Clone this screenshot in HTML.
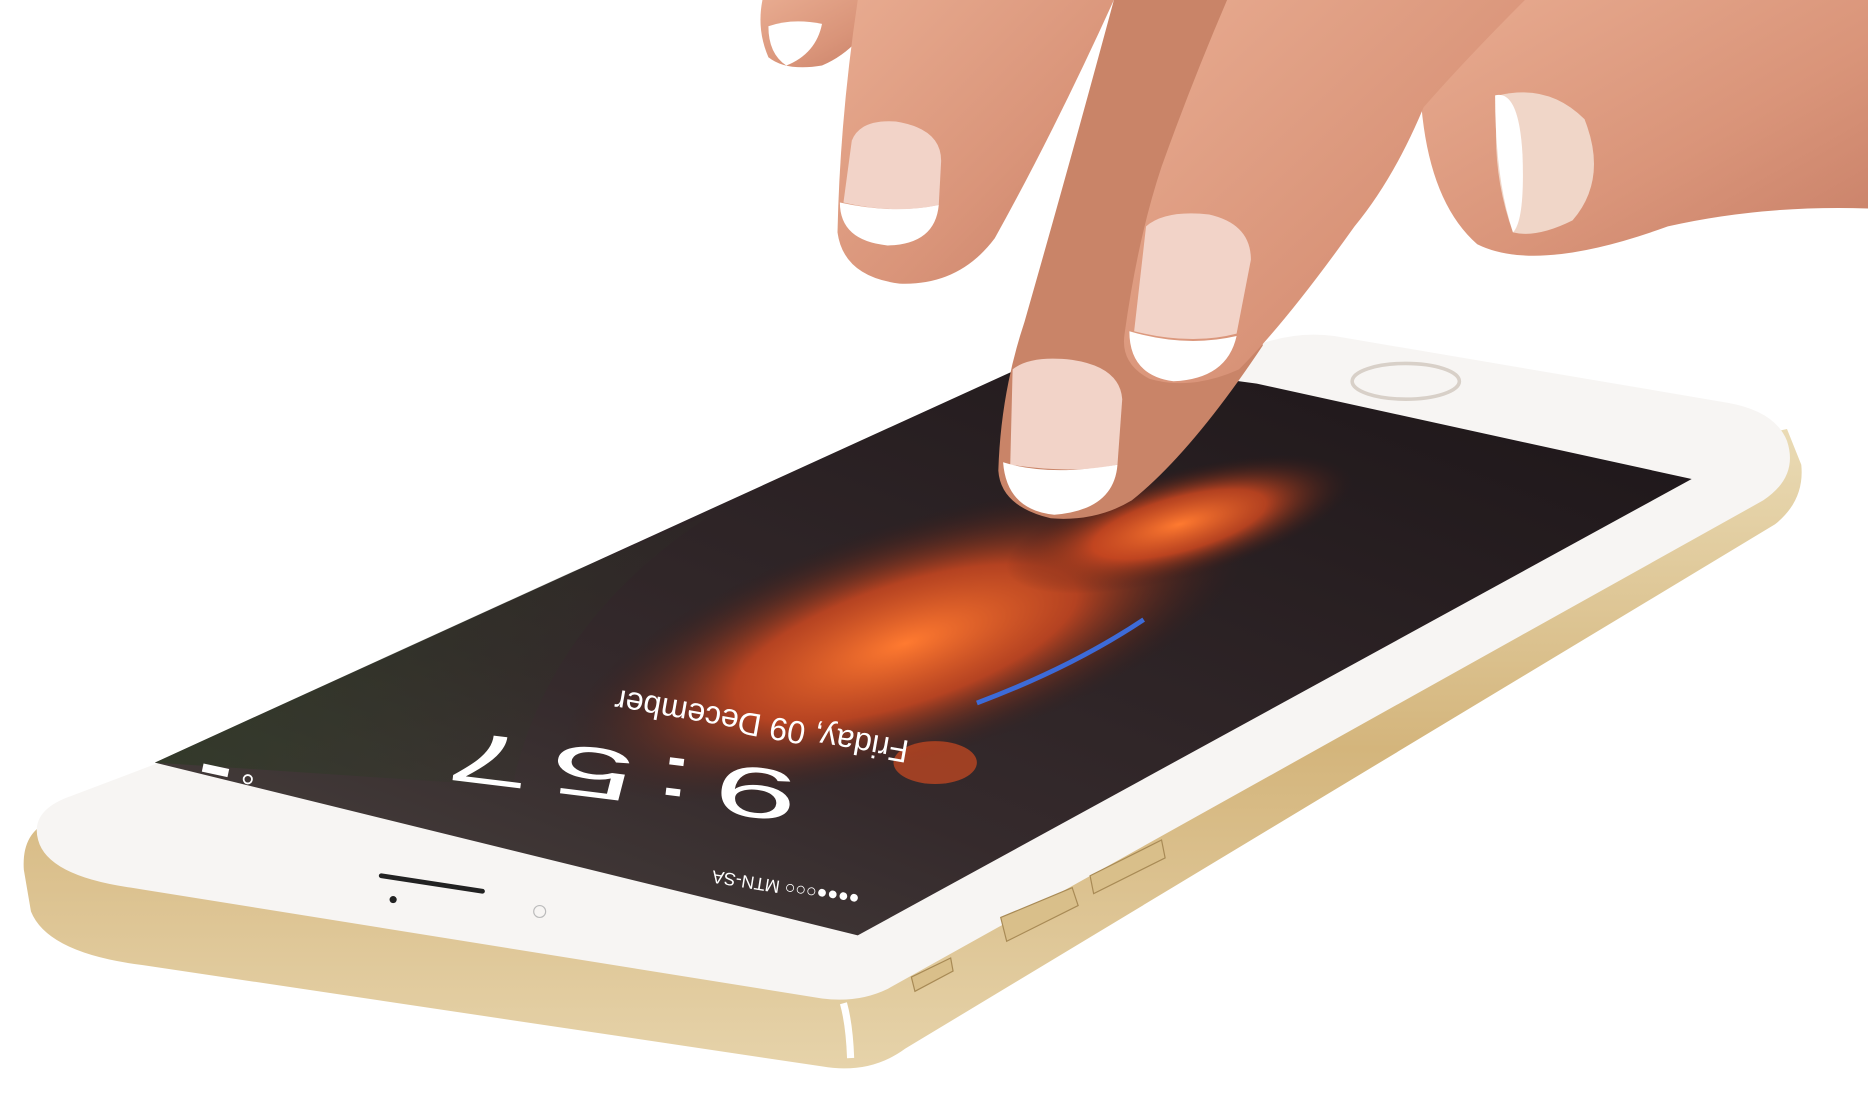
<!DOCTYPE html>
<html><head><meta charset="utf-8"><style>
html,body{margin:0;padding:0;background:#fff;width:1868px;height:1095px;overflow:hidden}
svg{display:block}
</style></head><body>
<svg width="1868" height="1095" viewBox="0 0 1568 919" preserveAspectRatio="none" xmlns="http://www.w3.org/2000/svg">
<defs>
<linearGradient id="gold" x1="0" y1="0" x2="0" y2="1">
<stop offset="0" stop-color="#eadbb5"/><stop offset="0.5" stop-color="#d4b57c"/><stop offset="1" stop-color="#e6d3aa"/></linearGradient>
<linearGradient id="scr" x1="0" y1="1" x2="1" y2="0">
<stop offset="0" stop-color="#4a4440"/><stop offset="0.35" stop-color="#352a2c"/><stop offset="1" stop-color="#1c1518"/></linearGradient>
<radialGradient id="fish" cx="0.5" cy="0.5" r="0.5">
<stop offset="0" stop-color="#ff7a30"/><stop offset="0.5" stop-color="#d64a20" stop-opacity="0.8"/><stop offset="1" stop-color="#3a1a18" stop-opacity="0"/></radialGradient>
<linearGradient id="skin" x1="0" y1="0" x2="1" y2="1">
<stop offset="0" stop-color="#e8ab90"/><stop offset="0.6" stop-color="#d99479"/><stop offset="1" stop-color="#c88068"/></linearGradient>
<linearGradient id="grn" x1="0" y1="0" x2="1" y2="0.3">
<stop offset="0" stop-color="#2c3a24" stop-opacity="0.9"/><stop offset="1" stop-color="#2c3a24" stop-opacity="0"/></linearGradient>
</defs>
<path d="M40 690 Q18 700 20 730 L26 765 Q40 800 120 810 L690 895 Q730 902 760 880 L1490 440 Q1515 420 1512 390 L1500 360 Z" fill="url(#gold)"/>
<path d="M708 842 Q713 860 714 888" stroke="#fff" stroke-width="6" fill="none"/>
<path d="M60 668 Q25 680 32 705 Q40 735 110 745 L690 838 Q720 842 745 830 L1480 420 Q1510 400 1500 370 Q1490 345 1450 338 L1120 282 Q1090 278 1060 288 Z" fill="#f7f5f3"/>
<path d="M130 640 L720 785 L1420 402 L1055 322 L880 298 Z" fill="url(#scr)"/>
<path d="M130 640 L480 480 L600 430 Q460 520 430 660 Z" fill="url(#grn)"/>
<ellipse cx="760" cy="540" rx="300" ry="100" transform="rotate(-18 760 540)" fill="url(#fish)"/>
<ellipse cx="990" cy="440" rx="150" ry="45" transform="rotate(-15 990 440)" fill="url(#fish)"/>
<path d="M820 590 Q900 560 960 520" stroke="#3d6bd8" stroke-width="4" fill="none"/>
<ellipse cx="785" cy="640" rx="35" ry="18" fill="#e85020" opacity="0.6"/>
<g fill="#fff" font-family="Liberation Sans, sans-serif">
<text transform="translate(672,649) rotate(187) scale(2.1,1)" font-size="60" letter-spacing="8">9:57</text>
<text transform="translate(764,622) rotate(190)" font-size="27">Friday, 09 December</text>
<text transform="translate(722,750) rotate(189)" font-size="15">●●●●○○○ MTN-SA</text>
<rect x="170" y="643" width="22" height="7" fill="#fff" transform="rotate(12 181 646)"/>
<circle cx="208" cy="654" r="3.5" fill="none" stroke="#fff" stroke-width="1.5"/>
</g>
<line x1="320" y1="735" x2="405" y2="748" stroke="#222" stroke-width="4" stroke-linecap="round"/>
<circle cx="330" cy="755" r="3" fill="#222"/>
<circle cx="453" cy="765" r="5" fill="none" stroke="#bbb"/>
<ellipse cx="1180" cy="320" rx="45" ry="15" fill="none" stroke="#d8d0c8" stroke-width="3"/>
<path d="M840 770 L900 745 L905 760 L845 790 Z" fill="#d9bf8a" stroke="#a88a55"/>
<path d="M915 735 L975 705 L978 720 L918 750 Z" fill="#d9bf8a" stroke="#a88a55"/>
<path d="M765 820 L798 804 L800 815 L768 832 Z" fill="#d9bf8a" stroke="#a88a55"/>
<g fill="url(#skin)">
<path d="M640 0 L740 0 Q725 40 690 55 Q660 60 645 48 Q635 25 640 0 Z"/>
<path d="M1193 88 Q1200 170 1240 205 Q1290 230 1400 190 Q1480 172 1568 175 L1568 0 L1270 0 Z"/>
<path d="M720 0 L935 0 Q885 110 835 200 Q805 240 755 238 Q708 232 703 195 Q705 100 720 0 Z"/>
<path d="M935 0 L1035 0 L1060 290 Q1000 380 950 420 Q920 438 882 435 Q840 425 838 395 Q840 330 860 270 Q900 130 935 0 Z" fill="#c98468"/>
<path d="M1030 0 L1280 0 Q1230 50 1195 90 Q1170 150 1137 190 Q1080 270 1040 310 Q1000 328 965 318 Q940 305 944 280 Q955 200 975 140 Q1000 70 1030 0 Z"/>
</g>
<path d="M850 310 Q865 298 900 302 Q940 308 942 335 L938 390 Q900 398 848 390 Z" fill="#f2d3c8"/>
<path d="M842 388 Q880 400 938 390 Q935 428 885 432 Q845 428 842 388 Z" fill="#fff"/>
<path d="M962 190 Q978 176 1015 180 Q1050 188 1050 218 L1038 280 Q1000 290 952 278 Z" fill="#f2d3c8"/>
<path d="M948 278 Q995 292 1038 282 Q1030 318 985 320 Q948 315 948 278 Z" fill="#fff"/>
<path d="M715 118 Q722 100 752 102 Q790 108 790 135 L788 172 Q750 180 708 170 Z" fill="#f2d3c8"/>
<path d="M705 170 Q750 180 788 172 Q785 205 745 206 Q705 202 705 170 Z" fill="#fff"/>
<path d="M1258 80 Q1300 70 1330 100 Q1350 150 1320 185 Q1290 200 1270 195 Q1250 140 1258 80 Z" fill="#f0d6c8"/>
<path d="M1255 80 Q1275 75 1278 130 Q1280 185 1270 195 Q1255 150 1255 80 Z" fill="#fff"/>
<path d="M645 22 Q665 15 690 20 Q685 45 660 55 Q645 45 645 22 Z" fill="#fff"/>
</svg>
</body></html>
